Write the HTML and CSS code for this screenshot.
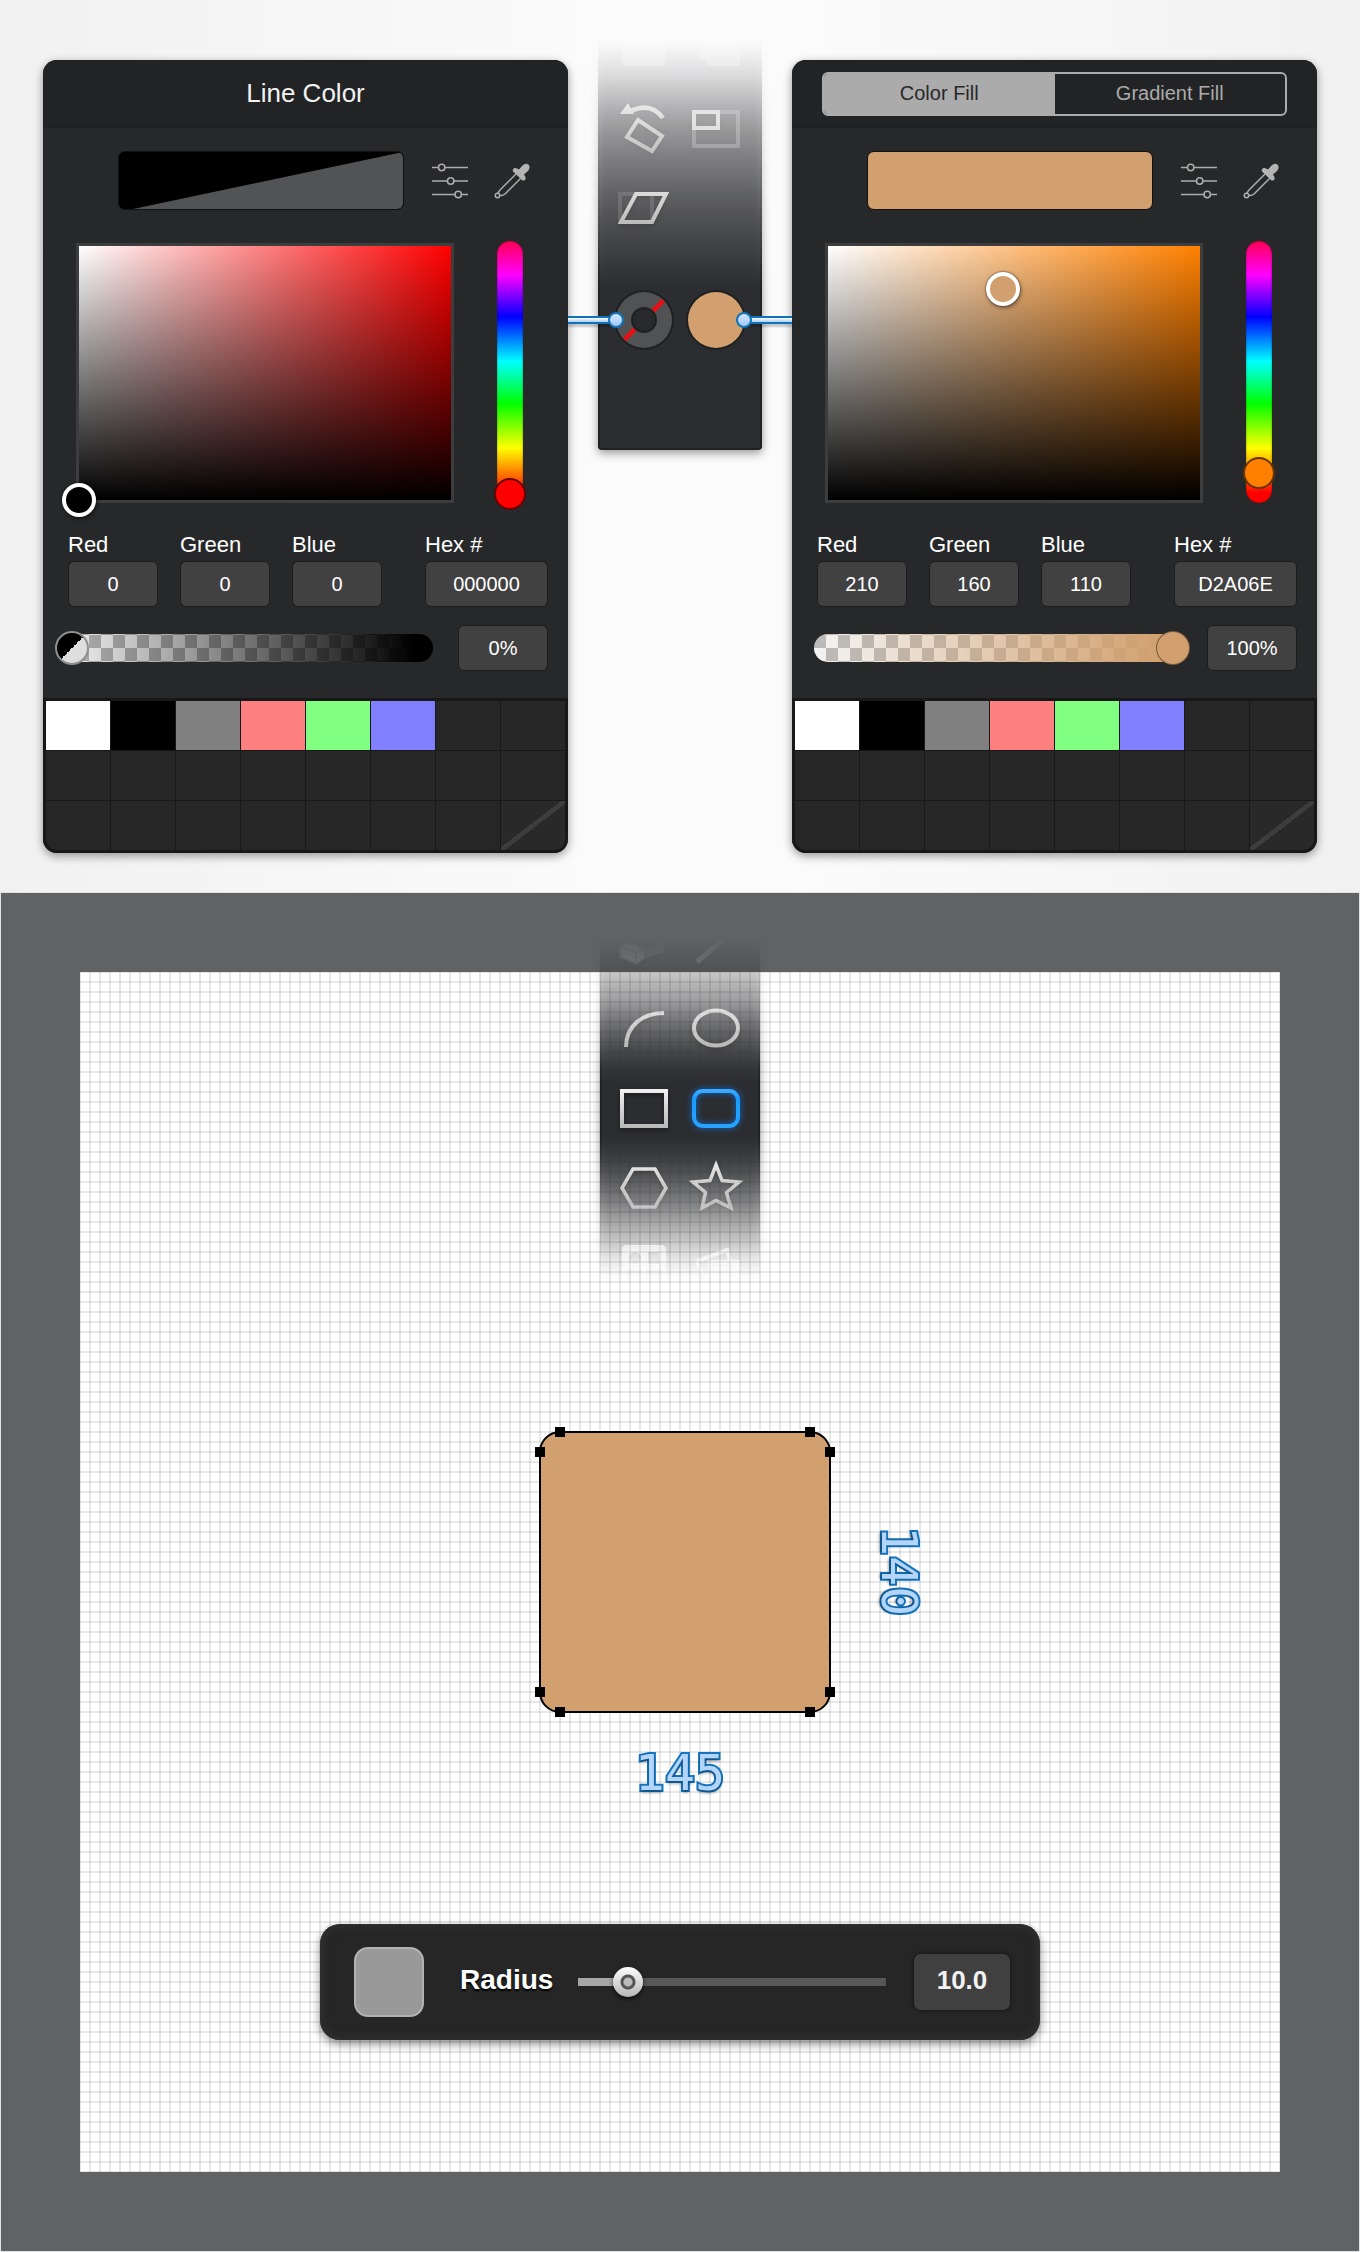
FILE: index.html
```html
<!DOCTYPE html>
<html lang="en">
<head>
<meta charset="utf-8">
<meta name="viewport" content="width=device-width, initial-scale=1">
<title>Rounded rectangle with color fill</title>
<link rel="stylesheet" href="styles.css">
</head>
<body>
<svg class="defs" width="0" height="0" aria-hidden="true">
  <defs>
    <linearGradient id="metal" gradientUnits="userSpaceOnUse" x1="0" y1="4" x2="0" y2="48">
      <stop offset="0" stop-color="#f6f6f6"/><stop offset="1" stop-color="#b4b4b4"/>
    </linearGradient>
    <linearGradient id="azure" gradientUnits="userSpaceOnUse" x1="0" y1="4" x2="0" y2="48">
      <stop offset="0" stop-color="#4db2ff"/><stop offset="0.3" stop-color="#189bff"/><stop offset="1" stop-color="#2aa3ff"/>
    </linearGradient>
    <symbol id="sliders" viewBox="0 0 36 36">
      <g fill="none" stroke="#adadad" stroke-width="1.5">
        <path d="M0 4.500H6.500M13 4.500H36M0 18H15.500M22 18H36M0 31.500H23M29.500 31.500H36"/>
        <circle cx="9.700" cy="4.500" r="3.200"/><circle cx="18.700" cy="18" r="3.200"/><circle cx="26.200" cy="31.500" r="3.200"/>
      </g>
    </symbol>
    <symbol id="dropper" viewBox="0 0 36 36">
      <path d="M22 11L6.500 26.500Q4 29 4 31M26.500 15.500L11 31Q8.500 33 6 32.500" fill="none" stroke="#adadad" stroke-width="1.500"/>
      <circle cx="3.500" cy="32.500" r="2.200" fill="none" stroke="#adadad" stroke-width="1.500"/>
      <path d="M19 8.500Q18 6 20.500 5Q22.500 4.500 25 6.500L28.500 2.500Q31.500-.5 34.500 1.500Q37 4.500 34 8L30 11.500Q32.500 15 31 17Q28.500 18.500 27 16Z" fill="#b4b4b4"/>
    </symbol>
  </defs>
</svg>

<main>
<section class="pickers">
  <article class="panel" aria-labelledby="line-title">
    <header class="panel-head"><h2 id="line-title">Line Color</h2></header>
    <div class="preview-row">
      <div class="preview none"><svg viewBox="0 0 283 57" preserveAspectRatio="none"><path d="M14 57L283 0V57Z" fill="#525355"/></svg></div>
      <button class="icon" aria-label="Color sliders"><svg><use href="#sliders"/></svg></button>
      <button class="icon" aria-label="Pick color"><svg><use href="#dropper"/></svg></button>
    </div>
    <div class="spectrum-row">
      <div class="spectrum red"><button class="sv-thumb black" aria-label="Saturation and brightness" style="left:0%;top:100%"></button></div>
      <div class="hue"><input class="hue-input red" type="range" min="0" max="360" value="0" aria-label="Hue"></div>
    </div>
    <div class="fields">
      <label>Red<input type="text" value="0"></label>
      <label>Green<input type="text" value="0"></label>
      <label>Blue<input type="text" value="0"></label>
      <label class="hex">Hex #<input type="text" value="000000"></label>
    </div>
    <div class="alpha-row">
      <div class="alpha black"><input class="alpha-input empty" type="range" min="0" max="100" value="0" aria-label="Opacity"></div>
      <input class="percent" type="text" value="0%" aria-label="Opacity percent">
    </div>
    <div class="palette">
      <i class="white"></i><i class="ink"></i><i class="gray"></i><i class="rose"></i><i class="mint"></i><i class="iris"></i><i></i><i></i>
      <i></i><i></i><i></i><i></i><i></i><i></i><i></i><i></i>
      <i></i><i></i><i></i><i></i><i></i><i></i><i></i><i class="slash"></i>
    </div>
  </article>

  <div class="middle">
    <div class="shade">
      <div class="tools upper">
        <button class="tool cut-top" aria-label="Distribute"><svg viewBox="0 0 52 52"><rect x="4" y="8" width="43" height="38" rx="4" fill="#f0f0f0"/><circle cx="16" cy="33" r="6" fill="#c4c4c4"/><path d="M28 39L36 26L43 39Z" fill="#c4c4c4"/></svg></button>
        <button class="tool cut-top" aria-label="Arrange"><svg viewBox="0 0 52 52"><rect x="9" y="8" width="30" height="32" fill="#ccc"/><rect x="18" y="16" width="30" height="28" fill="#bbb" stroke="#eee" stroke-width="4"/></svg></button>
        <button class="tool" aria-label="Rotate"><svg viewBox="0 0 52 52"><path d="M20 18L44 34L34 49L9 35Z" fill="none" stroke="url(#metal)" stroke-width="4"/><path d="M11 10Q32-1 45 16" fill="none" stroke="url(#metal)" stroke-width="4.500"/><path d="M2 12L10 1L16 12Z" fill="url(#metal)"/></svg></button>
        <button class="tool" aria-label="Scale"><svg viewBox="0 0 52 52"><rect x="4" y="10" width="44" height="34" fill="none" stroke="#fff" stroke-opacity=".3" stroke-width="4"/><rect x="4" y="10" width="24" height="16" fill="none" stroke="#f2f2f2" stroke-width="4"/></svg></button>
        <button class="tool" aria-label="Shear"><svg viewBox="0 0 52 52"><rect x="2" y="12" width="32" height="28" fill="none" stroke="#fff" stroke-opacity=".15" stroke-width="4"/><path d="M18 12H48L34 40H3Z" fill="none" stroke="url(#metal)" stroke-width="4"/></svg></button>
        <button class="tool wells" aria-label="Line color"><svg class="well" viewBox="0 0 60 60"><circle cx="30" cy="30" r="30" fill="#1f2022"/><circle cx="30" cy="30" r="28" fill="#505254"/><path d="M10.500 49.500L49.500 10.500" stroke="#e01217" stroke-width="5"/><circle cx="30" cy="30" r="13" fill="#202123"/><circle cx="30" cy="30" r="10.500" fill="#292a2d"/></svg></button>
        <button class="tool wells" aria-label="Fill color"><svg class="well" viewBox="0 0 60 60"><circle cx="30" cy="30" r="30" fill="#1f2022"/><circle cx="30" cy="30" r="28" fill="#d2a06e"/></svg></button>
      </div>
    </div>
    <span class="link to-line"></span>
    <span class="link to-fill"></span>
  </div>

  <article class="panel" aria-label="Fill">
    <header class="panel-head">
      <div class="segments"><button class="on">Color Fill</button><button>Gradient Fill</button></div>
    </header>
    <div class="preview-row">
      <div class="preview tan"></div>
      <button class="icon" aria-label="Color sliders"><svg><use href="#sliders"/></svg></button>
      <button class="icon" aria-label="Pick color"><svg><use href="#dropper"/></svg></button>
    </div>
    <div class="spectrum-row">
      <div class="spectrum orange"><button class="sv-thumb tan" aria-label="Saturation and brightness" style="left:47%;top:17%"></button></div>
      <div class="hue"><input class="hue-input orange" type="range" min="0" max="360" value="31" aria-label="Hue"></div>
    </div>
    <div class="fields">
      <label>Red<input type="text" value="210"></label>
      <label>Green<input type="text" value="160"></label>
      <label>Blue<input type="text" value="110"></label>
      <label class="hex">Hex #<input type="text" value="D2A06E"></label>
    </div>
    <div class="alpha-row">
      <div class="alpha tan"><input class="alpha-input full" type="range" min="0" max="100" value="100" aria-label="Opacity"></div>
      <input class="percent" type="text" value="100%" aria-label="Opacity percent">
    </div>
    <div class="palette">
      <i class="white"></i><i class="ink"></i><i class="gray"></i><i class="rose"></i><i class="mint"></i><i class="iris"></i><i></i><i></i>
      <i></i><i></i><i></i><i></i><i></i><i></i><i></i><i></i>
      <i></i><i></i><i></i><i></i><i></i><i></i><i></i><i class="slash"></i>
    </div>
  </article>
</section>

<section class="desk">
  <div class="paper">
    <figure class="drawing">
      <div class="shape-row">
        <svg class="shape" viewBox="0 0 300 290">
          <rect x="5" y="5" width="290" height="280" rx="20" fill="#d2a06e" stroke="#000" stroke-width="2"/>
          <path d="M20 0h10v10h-10zM270 0h10v10h-10zM0 20h10v10h-10zM290 20h10v10h-10zM0 260h10v10h-10zM290 260h10v10h-10zM20 280h10v10h-10zM270 280h10v10h-10z"/>
        </svg>
        <span class="size tall">140</span>
      </div>
      <figcaption class="size">145</figcaption>
    </figure>
    <div class="radius-bar">
      <button class="style-well" aria-label="Style"></button>
      <label for="radius">Radius</label>
      <input id="radius" class="radius-range" type="range" min="0" max="80" value="10">
      <input class="radius-value" type="text" value="10.0" aria-label="Radius value">
    </div>
  </div>
  <div class="shade floating">
    <div class="tools lower">
      <button class="tool cut-top" aria-label="Box"><svg viewBox="0 0 52 52"><path d="M2 27L10 22L27 29V38L18 44L2 37Z" fill="#ccc" stroke="#777" stroke-width="1.500"/><path d="M2 27L18 33L27 29M18 33V44" fill="none" stroke="#777" stroke-width="1.500"/><path d="M28 29L46 21V33L28 38Z" fill="#777"/></svg></button>
      <button class="tool cut-top" aria-label="Line"><svg viewBox="0 0 52 52"><path d="M7 42L38 15" stroke="#bbb" stroke-width="5"/></svg></button>
      <button class="tool" aria-label="Arc"><svg viewBox="0 0 52 52"><path d="M8 45C8 24 24 11 46 11" fill="none" stroke="url(#metal)" stroke-width="4"/></svg></button>
      <button class="tool" aria-label="Ellipse"><svg viewBox="0 0 52 52"><ellipse cx="26" cy="26" rx="22" ry="17.500" fill="none" stroke="url(#metal)" stroke-width="4"/></svg></button>
      <button class="tool" aria-label="Rectangle"><svg viewBox="0 0 52 52"><rect x="4" y="9" width="44" height="35" fill="none" stroke="url(#metal)" stroke-width="4"/></svg></button>
      <button class="tool glow" aria-label="Rounded rectangle"><svg viewBox="0 0 52 52"><rect x="4" y="9" width="44" height="35" rx="9" fill="none" stroke="url(#azure)" stroke-width="4"/></svg></button>
      <button class="tool" aria-label="Polygon"><svg viewBox="0 0 52 52"><path d="M15 7H37L48 26L37 45H15L4 26Z" fill="none" stroke="url(#metal)" stroke-width="3.500"/></svg></button>
      <button class="tool" aria-label="Star"><svg viewBox="0 0 52 52"><path d="M26 3L32 18.500L49 20L36.500 30.500L41 46L26 38.500L12 46L15.500 30.500L3 20L20 18.500Z" fill="none" stroke="url(#metal)" stroke-width="3.500"/></svg></button>
      <button class="tool cut-bottom" aria-label="Shape library"><svg viewBox="0 0 52 52"><path fill-rule="evenodd" d="M9 3H43Q48 3 48 8V48H4V8Q4 3 9 3ZM11 16A6 6 0 0 0 23 16A6 6 0 0 0 11 16ZM30 10V22H41V10ZM8 28V40H24V28ZM28 28V40H44V28Z" fill="#fff"/></svg></button>
      <button class="tool cut-bottom" aria-label="Image"><svg viewBox="0 0 52 52"><path d="M7 19L37 8L41 22M7 19L12 32" fill="none" stroke="#fff" stroke-width="4"/><rect x="20" y="20" width="28" height="20" fill="#ddd" stroke="#fff" stroke-width="4"/></svg></button>
    </div>
  </div>
</section>
</main>
</body>
</html>
```
FILE: styles.css
```css
*, *::before, *::after { box-sizing: border-box; }

body {
  margin: 0;
  font-family: "Liberation Sans", Arial, sans-serif;
  background: #f1f1f1;
}

button, input { font: inherit; }
button { padding: 0; border: 0; background: none; cursor: pointer; }
svg { display: block; overflow: visible; }
.defs { position: absolute; }

/* Color pickers */
.pickers {
  display: grid;
  grid-template-columns: minmax(0, 525px) minmax(164px, 1fr) minmax(0, 525px);
  padding: 60px 43px 39px;
  background: linear-gradient(90deg, #f1f1f1, #fcfbfc 45%, #fcfbfc 58%, #f1f1f1);
}

.panel {
  overflow: hidden;
  border-radius: 14px;
  background: #27282a;
  color: #fff;
  box-shadow: 0 3px 10px rgba(0, 0, 0, .4);
}

.panel-head {
  display: flex;
  align-items: center;
  justify-content: center;
  height: 68px;
  padding: 0 30px;
  border-bottom: 1px solid #1e1f20;
  background: #222325;
}

.panel-head h2 {
  margin: 0;
  font-size: 26px;
  font-weight: 400;
  color: #f2f2f2;
}

.segments {
  display: flex;
  flex: 1;
  height: 44px;
  overflow: hidden;
  border: 2px solid #ababab;
  border-radius: 6px;
}

.segments button { flex: 1; font-size: 20px; color: #ababab; }
.segments .on { background: #ababab; color: #27282a; }

.preview-row {
  display: flex;
  align-items: center;
  gap: 26px;
  padding: 23px 38px 0 75px;
}

.preview {
  flex: 1;
  height: 59px;
  margin-right: 2px;
  overflow: hidden;
  border: 1px solid #101010;
  border-radius: 7px;
}

.preview.none { background: #000; }
.preview svg { width: 100%; height: 100%; }
.icon, .icon svg { width: 36px; height: 36px; }

.tan { background: #d2a06e; }

.spectrum-row {
  display: flex;
  align-items: flex-end;
  gap: 43px;
  padding: 31px 45px 0 33px;
}

.spectrum {
  position: relative;
  flex: 1;
  height: 260px;
  border: 3px solid #3c3d3e;
}

.spectrum.red { background: linear-gradient(transparent, #000), linear-gradient(90deg, #fff, #f00); background-clip: padding-box; }
.spectrum.orange { background: linear-gradient(transparent, #000), linear-gradient(90deg, #fff, #ff8000); background-clip: padding-box; }

.sv-thumb {
  position: absolute;
  width: 34px;
  height: 34px;
  margin: -17px;
  border: 4px solid #fff;
  border-radius: 50%;
  box-shadow: 0 0 2px rgba(0, 0, 0, .8), 1px 2px 4px rgba(0, 0, 0, .4);
}

.sv-thumb.black { background: #000; }

.hue {
  display: flex;
  align-items: center;
  justify-content: center;
  width: 26px;
  height: 262px;
  border-radius: 13px;
  background: linear-gradient(#ff0055, #f0f 13%, #00f 29%, #0ff 46%, #0f0 62%, #ff0 79%, #f60 90%, #f00 96%);
  box-shadow: inset 0 0 2px rgba(0, 0, 0, .5);
}

input[type="range"] { appearance: none; margin: 0; background: none; }

.hue-input {
  flex: none;
  width: 32px;
  height: 276px;
  writing-mode: vertical-lr;
  direction: rtl;
}

.hue-input::-webkit-slider-thumb {
  appearance: none;
  width: 32px;
  height: 32px;
  border: 2px solid rgba(0, 0, 0, .6);
  border-radius: 50%;
}

.hue-input.red::-webkit-slider-thumb { background: #f00; }
.hue-input.orange::-webkit-slider-thumb { background: #ff8000; }

.fields {
  display: grid;
  grid-template-columns: 90fr 90fr 90fr 144fr;
  gap: 22px;
  padding: 30px 20px 0 25px;
}

.fields label {
  display: flex;
  flex-direction: column;
  gap: 4px;
  font-size: 22px;
  line-height: 24px;
}

.fields .hex { padding-left: 21px; }

.panel input[type="text"] {
  width: 100%;
  height: 46px;
  padding: 0 2px;
  border: 1px solid #1d1d1e;
  border-radius: 6px;
  background: #414142;
  color: #fff;
  font-size: 20px;
  text-align: center;
}

.alpha-row {
  display: flex;
  align-items: center;
  gap: 25px;
  padding: 18px 20px 27px 22px;
}

.panel .alpha-row .percent { flex: none; width: 90px; }

.alpha {
  display: flex;
  flex: 1;
  align-items: center;
  height: 28px;
  border-radius: 14px;
}

.alpha.black { background: linear-gradient(90deg, rgba(0, 0, 0, .05), #000 95%), repeating-conic-gradient(#fff 0 25%, #bbb 0 50%) 0 1px / 24px 26px; }
.alpha.tan { background: linear-gradient(90deg, rgba(210, 160, 110, 0), #d2a06e 95%), repeating-conic-gradient(#f4f4f4 0 25%, #bbb 0 50%) 0 1px / 24px 26px; }

.alpha-input { flex: 1; height: 34px; min-width: 0; }
.alpha .alpha-input { margin: 0 -8px 0 -10px; }

.alpha-input::-webkit-slider-thumb {
  appearance: none;
  width: 34px;
  height: 34px;
  border-radius: 50%;
}

.alpha-input.empty::-webkit-slider-thumb {
  border: 2px solid #8f8f8f;
  background: linear-gradient(135deg, #000 50%, #dedede 50%);
}

.alpha-input.full::-webkit-slider-thumb {
  border: 1px solid rgba(0, 0, 0, .45);
  background: #d2a06e;
}

.palette {
  display: grid;
  grid-template-columns: repeat(8, 1fr);
  grid-auto-rows: 49px;
  gap: 1px;
  padding: 3px;
  background: #181818;
}

.palette i { background: #262626; }
.palette .white { background: #fff; }
.palette .ink { background: #000; }
.palette .gray { background: #808080; }
.palette .rose { background: #ff8080; }
.palette .mint { background: #80ff80; }
.palette .iris { background: #8080ff; }
.palette .slash { background: linear-gradient(to bottom right, #292929 47%, #3d3d3d 47%, #3d3d3d 53%, #292929 53%); }
.palette i:nth-child(17) { border-bottom-left-radius: 11px; }
.palette i:nth-child(24) { border-bottom-right-radius: 11px; }

/* Tool strips */
.middle { position: relative; }

.shade {
  width: 164px;
  margin: -24px auto 0;
  filter: drop-shadow(0 3px 5px rgba(0, 0, 0, .4));
}

.tools {
  display: grid;
  grid-template-columns: repeat(2, 1fr);
  border: 2px solid #202123;
  border-radius: 3px;
  background: #2c2d30;
}

.tools.upper {
  padding: 0 8px 88px;
  mask-image: linear-gradient(transparent 1%, rgba(0, 0, 0, .1) 9%, rgba(0, 0, 0, .36) 22%, rgba(0, 0, 0, .7) 42%, #000 61%);
}

.tools.lower {
  padding: 0 6px;
  mask-image: linear-gradient(transparent 2%, rgba(0, 0, 0, .2) 12%, rgba(0, 0, 0, .37) 20%, rgba(0, 0, 0, .62) 28%, rgba(0, 0, 0, .95) 39%, #000 43%, #000 58%, rgba(0, 0, 0, .85) 64%, rgba(0, 0, 0, .6) 72%, rgba(0, 0, 0, .3) 82%, rgba(0, 0, 0, .07) 92%, transparent 98%);
}

.tool {
  display: flex;
  align-items: center;
  justify-content: center;
  height: 80px;
}

.tool svg { width: 52px; height: 52px; filter: drop-shadow(0 2px 2px rgba(0, 0, 0, .4)); }
.tool.glow svg { filter: drop-shadow(0 0 3px #0a6cd8); }
.tool.cut-top { align-items: flex-end; height: 50px; padding-bottom: 16px; overflow: hidden; }
.tool.cut-bottom { align-items: flex-start; height: 58px; padding-top: 14px; overflow: hidden; }
.upper .cut-top svg { opacity: .5; filter: none; }
.lower .cut-top { height: 56px; }
.tool.wells { margin-top: 32px; grid-row: 4; }
.tool .well { width: 60px; height: 60px; filter: none; }

.link {
  position: absolute;
  top: 256px;
  width: 48px;
  height: 8px;
  border: solid #1072b8;
  border-width: 2px 0;
  background: linear-gradient(#fff, #a9cdf5);
  box-shadow: 0 3px 2px rgba(0, 0, 0, .2);
}

.link::after {
  content: "";
  position: absolute;
  top: -6px;
  width: 16px;
  height: 16px;
  border: 2px solid #1072b8;
  border-radius: 50%;
  background: linear-gradient(#d3e6fd, #a2c8f8);
}

.to-line { left: 0; }
.to-line::after { right: -8px; }
.to-fill { right: 0; }
.to-fill::after { left: -8px; }

/* Canvas */
.desk {
  position: relative;
  padding: 79px;
  border: 1px solid #e0e2e4;
  background: #616264;
}

.paper {
  display: flex;
  flex-direction: column;
  align-items: center;
  padding: 455px 20px 132px;
  background:
    linear-gradient(90deg, rgba(0, 0, 0, .09) 2px, transparent 2px) 9px 0 / 10px 10px,
    linear-gradient(rgba(0, 0, 0, .09) 2px, transparent 2px) 0 9px / 10px 10px,
    #fff;
}

.drawing {
  display: flex;
  flex-direction: column;
  align-items: center;
  margin: 0;
}

.shape-row { position: relative; margin-left: 10px; }
.shape { width: 300px; height: 290px; }

.size {
  margin-top: 26px;
  font-family: "DejaVu Sans Mono", monospace;
  font-size: 50px;
  line-height: 60px;
  color: #b3d5f9;
  -webkit-text-stroke: 4px #1474bd;
  paint-order: stroke fill;
  text-shadow: 0 3px 3px rgba(0, 0, 0, .3);
}

.size.tall {
  position: absolute;
  top: 99px;
  left: 334px;
  margin: 0;
  writing-mode: vertical-rl;
}

.radius-bar {
  display: flex;
  align-items: center;
  width: 100%;
  max-width: 720px;
  height: 116px;
  margin-top: 121px;
  padding: 0 30px 0 34px;
  border-radius: 20px;
  background: #262626;
  box-shadow: inset 0 0 8px 2px #323232, 0 4px 10px rgba(0, 0, 0, .45);
}

.style-well {
  flex: none;
  width: 70px;
  height: 70px;
  border: 2px solid #b2b2b2;
  border-radius: 14px;
  background: #999;
}

.radius-bar label {
  margin: 0 25px 0 36px;
  padding-bottom: 4px;
  font-size: 28px;
  font-weight: 700;
  color: #fff;
  text-shadow: 0 2px 2px #000;
}

.radius-range { flex: 1; min-width: 0; height: 30px; }

.radius-bar .radius-range {
  background: linear-gradient(90deg, #a6a6a6 16%, #585858 16%) center / 100% 8px no-repeat;
}

.radius-range::-webkit-slider-thumb {
  appearance: none;
  width: 30px;
  height: 30px;
  border-radius: 50%;
  background:
    radial-gradient(circle, #bbb 0 4px, #555 5px 7px, transparent 8px),
    linear-gradient(#fff, #b5b5b5);
  box-shadow: 0 2px 4px rgba(0, 0, 0, .7);
}

.radius-value {
  width: 96px;
  height: 56px;
  margin-left: 28px;
  padding: 0 0 4px;
  border: 0;
  border-radius: 7px;
  background: #404040;
  color: #f2f2f2;
  font-size: 26px;
  font-weight: 700;
  text-align: center;
  box-shadow: 0 0 4px rgba(0, 0, 0, .6);
}

.floating {
  position: absolute;
  top: 37px;
  left: 50%;
  width: 160px;
  margin: 0 0 0 -80px;
}
```
